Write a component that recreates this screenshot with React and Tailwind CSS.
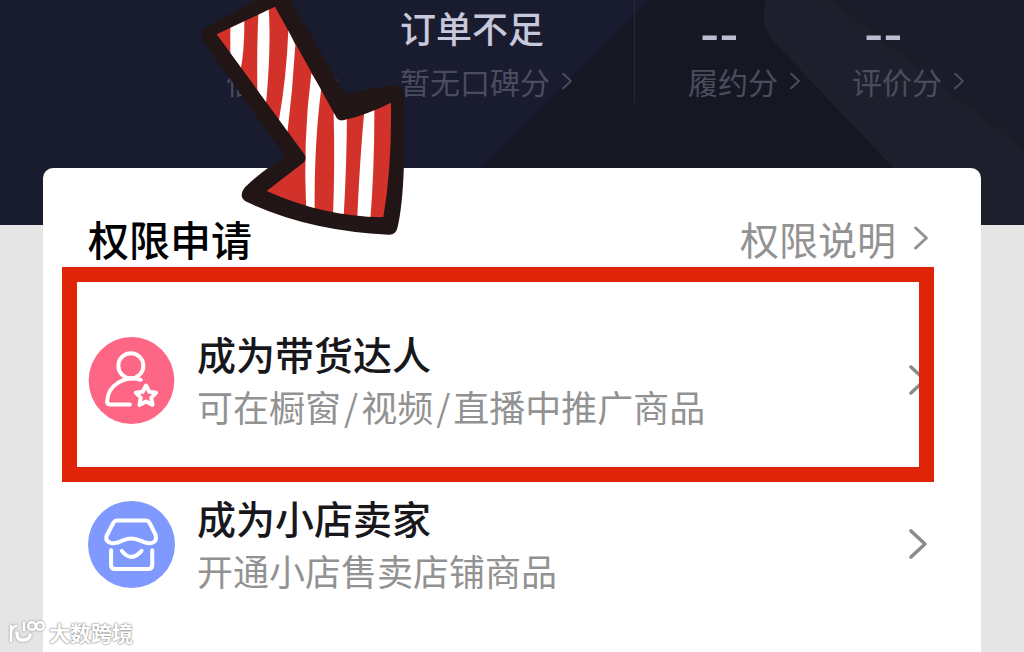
const cjk = "font-['Noto_Sans_CJK_SC',sans-serif]";

function Chevron({ className }) {
  return (
    <svg viewBox="0 0 18 30" className={className} fill="none" stroke="currentColor" strokeWidth="3.6" strokeLinecap="round" strokeLinejoin="round" aria-hidden="true">
      <path d="M2 2L16 15L2 28" />
    </svg>
  );
}

function Stat({ value, label, dashed }) {
  return (
    <a href="#score" className="flex flex-col whitespace-nowrap">
      {dashed ? (
        <span className="h-[58px] pl-3 font-['Liberation_Sans',sans-serif] text-[58px] leading-[66px] text-[#bcbcd2]">{value}</span>
      ) : (
        <span className="h-[58px] text-4xl leading-[54px] font-medium text-[#c8c8dc]">{value}</span>
      )}
      <span className="flex items-center gap-3 text-[30px] leading-[46px] text-[#4b4c5e]">
        {label}
        <Chevron className="h-[18px] w-[10px]" />
      </span>
    </a>
  );
}

function TalentIcon() {
  return (
    <svg viewBox="0 0 260 264" className="size-[87px] shrink-0" fill="none" stroke="#fff" strokeWidth="12" strokeLinecap="round" strokeLinejoin="round" aria-hidden="true">
      <ellipse cx="130" cy="132" rx="130" ry="132" fill="#fe6686" stroke="none" />
      <circle cx="128" cy="87" r="38" />
      <path d="M158 130C110 116 58 145 56 196Q56 205 66 205H125" />
      <path d="M174 147L184 166L205 169L190 184L194 206L174 196L154 206L158 184L143 169L164 166Z" />
    </svg>
  );
}

function ShopIcon() {
  return (
    <svg viewBox="0 0 260 260" className="size-[87px] shrink-0" fill="none" stroke="#fff" strokeWidth="12" strokeLinecap="round" strokeLinejoin="round" aria-hidden="true">
      <circle cx="130" cy="130" r="130" fill="#8099ff" stroke="none" />
      <path d="M87 58H172Q180 58 184 65L202 101Q208 124 186 126Q172 127 158 119Q128 105 102 119Q88 127 72 126Q50 123 56 103L76 65Q80 58 87 58Z" />
      <path d="M69 147V191Q69 203 81 203H180Q192 203 192 191V147" />
      <path d="M101 149Q129 185 160 149" />
    </svg>
  );
}

function Row({ icon, title, children, marked }) {
  return (
    <li className="relative">
      <a href="#apply" className="flex h-[164px] items-center gap-[22px] pr-[54px] pl-[45px]">
        {icon}
        <span className="flex min-w-0 flex-1 flex-col pb-0.5 whitespace-nowrap">
          <span className="text-[39px] leading-[54px] font-medium text-[#18181c]">{title}</span>
          <span className="text-4xl leading-[52px] text-[#929292]">{children}</span>
        </span>
        <Chevron className="h-[30px] w-[18px] text-[#8c8c8c]" />
      </a>
      {marked && <span className="pointer-events-none absolute -top-[31px] right-[47px] -bottom-5 left-[19px] border-[15px] border-[#e02407]" />}
    </li>
  );
}

function Backdrop() {
  return (
    <svg viewBox="0 0 1024 225" preserveAspectRatio="none" className="absolute inset-0 size-full" aria-hidden="true">
      <rect width="1024" height="225" fill="#191b2e" />
      <path d="M648 0L470 180V225H1024V0Z" fill="#151722" />
      <path d="M765 0Q760 25 772 40L900 175V225H1024V0Z" fill="#1d202c" />
      <path d="M830 0L1024 150V225V0Z" fill="#1b1c29" />
    </svg>
  );
}

function Arrow() {
  return (
    <svg viewBox="0 0 720 750" className="pointer-events-none absolute top-0 left-[200px] h-[250px] w-[240px]" aria-hidden="true">
      <defs>
        <clipPath id="arrow-body">
          <path d="M50 103L225 20L408 350Q414 363 430 361Q500 345 573 308Q576 500 550 652Q370 650 200 573L308 490Q322 480 314 464Z" />
        </clipPath>
      </defs>
      <path d="M14 84L205 -20H260L434 282L580 255Q612 255 612 300V490Q608 620 592 685Q587 704 568 704Q320 692 135 603Q115 588 135 562Q170 528 205 503L255 468Q130 295 10 122Q-4 96 14 84Z" fill="#211615" />
      <g clipPath="url(#arrow-body)">
        <rect width="720" height="750" fill="#d3322a" />
        <g fill="#fff">
          <path d="M91 60H133Q134 150 121 215L91 165Z" />
          <path d="M176 20H206Q214 150 197 320L172 270Q170 140 176 20Z" />
          <path d="M265 90L286 135Q278 270 262 400L236 365Q260 230 265 90Z" />
          <path d="M334 220L364 265Q342 430 344 640H319Q308 420 334 220Z" />
          <path d="M401 340H441Q440 500 431 650H399Q405 490 401 340Z" />
          <path d="M494 320H523Q524 500 510 670H471Q479 480 494 320Z" />
        </g>
      </g>
    </svg>
  );
}

function Watermark() {
  return (
    <div className="absolute bottom-1 left-2 flex items-center gap-[3px] text-white">
      <svg viewBox="0 0 38 26" className="h-[26px] w-[38px] drop-shadow-[0_0_1px_#888]" fill="none" stroke="#fff" strokeWidth="2.6" strokeLinecap="round" aria-hidden="true">
        <path d="M3 7V22M3 13Q4 8 8 7" />
        <path d="M9 14Q9 22 16 21Q22 20 22 16" strokeWidth="3.6" />
        <path d="M16 4V11" />
        <circle cx="24" cy="7" r="3.8" />
        <circle cx="32" cy="7" r="3.8" />
      </svg>
      <span className="text-[21px] leading-8 font-bold [text-shadow:0_0_2px_#888,0_0_2px_#999]">大数跨境</span>
    </div>
  );
}

export default function App() {
  return (
    <main className={`relative flex min-h-screen flex-col overflow-hidden bg-[#e5e5e5] ${cjk}`}>
      <header className="relative h-[225px]">
        <Backdrop />
        <div className="relative grid grid-cols-[226fr_174fr_234fr_54fr_164fr_172fr]">
          <span />
          <Stat value="--" label="信用分" dashed />
          <Stat value="订单不足" label="暂无口碑分" />
          <span className="h-[103px] w-px bg-[#272938]" />
          <Stat value="--" label="履约分" dashed />
          <Stat value="--" label="评价分" dashed />
        </div>
      </header>
      <section className="relative mx-[43px] -mt-[57px] flex-1 rounded-t-[10px] bg-white">
        <div className="flex h-[130px] items-start justify-between pt-[42px] pr-[53px] pl-[45px]">
          <h1 className="text-[41px] leading-[56px] font-medium text-black">权限申请</h1>
          <a href="#help" className="flex items-center gap-[18px] text-[39px] leading-[56px] text-[#929292]">
            权限说明
            <Chevron className="h-6 w-[14px]" />
          </a>
        </div>
        <ul>
          <Row icon={<TalentIcon />} title="成为带货达人" marked>
            可在橱窗<span className="mx-[3px]">/</span>视频<span className="mx-[3px]">/</span>直播中推广商品
          </Row>
          <Row icon={<ShopIcon />} title="成为小店卖家">开通小店售卖店铺商品</Row>
        </ul>
      </section>
      <Arrow />
      <Watermark />
    </main>
  );
}
